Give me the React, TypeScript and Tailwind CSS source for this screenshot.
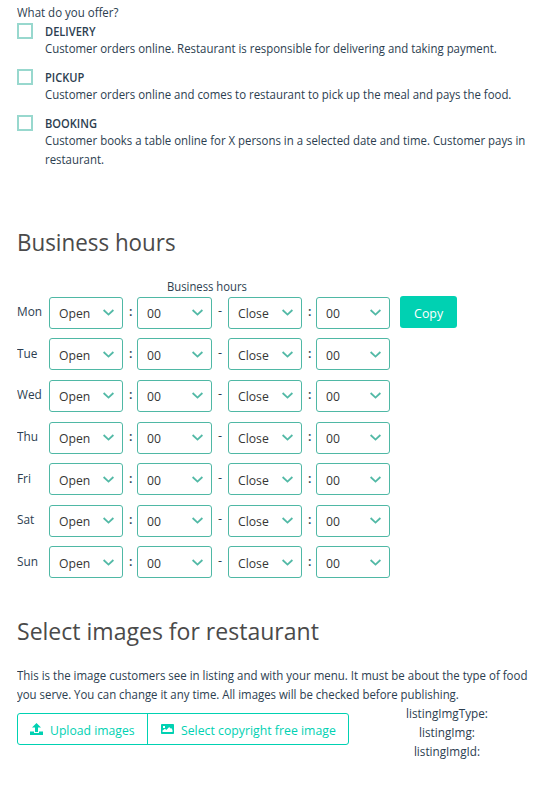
const offers = [
  {
    title: "DELIVERY",
    lines: [{ text: "Customer orders online. Restaurant is responsible for delivering and taking payment.", scale: "scale-x-[0.906]" }],
  },
  {
    title: "PICKUP",
    lines: [{ text: "Customer orders online and comes to restaurant to pick up the meal and pays the food.", scale: "scale-x-[0.906]" }],
  },
  {
    title: "BOOKING",
    lines: [
      { text: "Customer books a table online for X persons in a selected date and time. Customer pays in", scale: "scale-x-[0.906]" },
      { text: "restaurant.", scale: "scale-x-[0.906]" },
    ],
  },
];

const days = ["Mon", "Tue", "Wed", "Thu", "Fri", "Sat", "Sun"];

function Picker({ label, width }: { label: string; width: string }) {
  return (
    <button
      className={`${width} flex h-8 shrink-0 items-center justify-between rounded-[3px] border border-[#4fb8a5] bg-white pr-[8.5px] pl-[9px] text-[13.33px] leading-[30px] text-[#363636]`}
    >
      <span className="mt-[1px] w-7 origin-left scale-x-[0.915] text-left">{label}</span>
      <svg className="h-[7px] w-[11px]" viewBox="0 0 11 7" fill="none" stroke="#52b9a6" strokeWidth="1.8">
        <path d="M.6 1 5.5 5.6 10.4 1" />
      </svg>
    </button>
  );
}

function DayRow({ day, first }: { day: string; first: boolean }) {
  return (
    <div className="flex h-[41.6px] items-start">
      <span className="mt-[5.5px] w-8 shrink-0 origin-left scale-x-[0.94]">{day}</span>
      <Picker label="Open" width="w-[74px]" />
      <span className="mt-[5.5px] w-[14px] pl-[6px] font-semibold">:</span>
      <Picker label="00" width="w-[75px]" />
      <span className="mt-[4.5px] w-4 pl-[6px]">-</span>
      <Picker label="Close" width="w-[74px]" />
      <span className="mt-[5.5px] w-[14px] pl-[6px] font-semibold">:</span>
      <Picker label="00" width="w-[74px]" />
      {first && (
        <button className="-mt-px ml-[10px] h-8 w-[57px] rounded-[3px] bg-[#00d1b2] text-[13.33px] leading-[34px] text-white">
          <span className="inline-block scale-x-[0.93]">Copy</span>
        </button>
      )}
    </div>
  );
}

export default function App() {
  return (
    <div className="h-[785px] w-[553px] overflow-hidden bg-white pt-[3px] pl-[17px] font-['Open_Sans',sans-serif] text-[12.6px] leading-[19px] whitespace-nowrap text-[#2c3e50]">
      <p className="w-max origin-left scale-x-[0.912]">What do you offer?</p>
      <div className="flex flex-col gap-[10px]">
        {offers.map((o) => (
          <div key={o.title} className="flex h-9 last:h-[55px]">
            <span className="mt-px mr-[11.5px] size-4 shrink-0 border-2 border-[#98d8ce]" />
            <div>
              <p className="h-[17px] w-max origin-left scale-x-[0.925] text-[12px] leading-5 font-semibold">{o.title}</p>
              {o.lines.map((l) => (
                <p key={l.text} className={`${l.scale} w-max origin-left`}>{l.text}</p>
              ))}
            </div>
          </div>
        ))}
      </div>

      <h2 className="mt-[57px] h-[51px] w-max origin-left scale-x-[0.913] text-[24.5px] leading-8 text-[#4a4a4a]">
        Business hours
      </h2>
      <p className="ml-[150px] h-[19.75px] w-max origin-left scale-x-[0.895]">Business hours</p>
      {days.map((d, i) => (
        <DayRow key={d} day={d} first={i === 0} />
      ))}

      <h2 className="mt-[27.05px] h-[51px] w-max origin-left scale-x-[0.94] text-[24.5px] leading-8 text-[#4a4a4a]">
        Select images for restaurant
      </h2>
      <p className="w-max origin-left scale-x-[0.911]">
        This is the image customers see in listing and with your menu. It must be about the type of food
      </p>
      <p className="w-max origin-left scale-x-[0.906]">
        you serve. You can change it any time. All images will be checked before publishing.
      </p>
      <div className="flex">
        <div className="mt-[9px] flex h-8 w-[332px] rounded-[3px] border border-[#00d1b2] text-[13.33px] leading-[33px] text-[#00d1b2]">
          <button className="flex w-[130px] shrink-0 items-start border-r border-[#00d1b2] pl-[12px]">
            <svg className="mt-[9px] mr-[7px] h-[13px] w-[13px] shrink-0" viewBox="0 0 13 13" fill="#00d1b2">
              <path d="M6.5 0 11 4.6H8V9H5V4.6H2Z" />
              <path d="M0 8.6H4V10H9V8.6H13V12H0Z" />
            </svg>
            <span className="origin-left scale-x-[0.915]">Upload images</span>
          </button>
          <button className="flex w-[200px] items-start pl-[13px]">
            <svg className="mt-[10px] mr-[7px] h-[10px] w-[13px] shrink-0" viewBox="0 0 13 10">
              <rect width="13" height="10" rx=".8" fill="#00d1b2" />
              <path d="M1.5 8V6.6L4 4.8 5.3 6 8.2 3 9.4 4.6 10.2 4 11.5 6V8Z" fill="#fff" />
              <rect x="2" y="2" width="2" height="2" fill="#fff" />
            </svg>
            <span className="origin-left scale-x-[0.921]">Select copyright free image</span>
          </button>
        </div>
        <div className="ml-[54px] flex scale-x-[0.93] flex-col text-center">
          <p>listingImgType:</p>
          <p>listingImg:</p>
          <p>listingImgId:</p>
        </div>
      </div>
    </div>
  );
}
